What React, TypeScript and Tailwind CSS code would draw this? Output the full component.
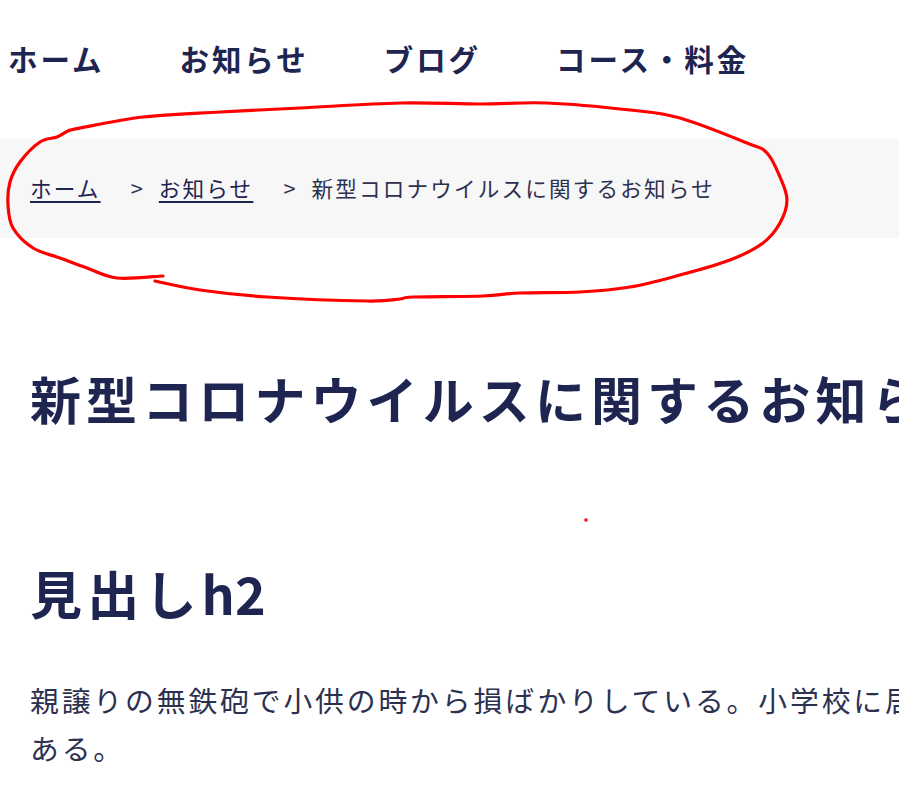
import React from "react";

const pts: [number, number][] = [
  [163, 276], [117, 278], [87, 268], [60, 258], [33, 248], [13, 228], [8, 205], [10, 182],
  [20, 162], [40, 142], [57, 137], [68, 131], [80, 128], [143, 117], [220, 112], [300, 108],
  [400, 103], [480, 104], [547, 103], [630, 110], [680, 118], [747, 143], [767, 153],
  [780, 177], [787, 200], [780, 223], [763, 243], [730, 260], [680, 275], [630, 287],
  [580, 292], [520, 293], [483, 296], [413, 297], [400, 299], [367, 301], [267, 297],
  [200, 290], [155, 281],
];

function smooth(p: [number, number][]): string {
  let d = `M ${p[0][0]} ${p[0][1]}`;
  for (let i = 0; i < p.length - 1; i++) {
    const p0 = p[i - 1] || p[i];
    const p1 = p[i];
    const p2 = p[i + 1];
    const p3 = p[i + 2] || p2;
    const c1x = p1[0] + (p2[0] - p0[0]) / 6;
    const c1y = p1[1] + (p2[1] - p0[1]) / 6;
    const c2x = p2[0] - (p3[0] - p1[0]) / 6;
    const c2y = p2[1] - (p3[1] - p1[1]) / 6;
    d += ` C ${c1x.toFixed(1)} ${c1y.toFixed(1)} ${c2x.toFixed(1)} ${c2y.toFixed(1)} ${p2[0]} ${p2[1]}`;
  }
  return d;
}

export default function App() {
  const font = { fontFamily: '"Noto Sans CJK JP", "Noto Sans", sans-serif' };
  return (
    <div className="relative w-[899px] h-[796px] overflow-hidden bg-white" style={font}>
      <header className="h-[139px] pt-[40px]">
        <nav className="flex gap-[75px] pl-[8px] text-[29.5px] leading-[36px] font-bold tracking-[0.1em] text-[#1e2550]">
          <span>ホーム</span>
          <span>お知らせ</span>
          <span>ブログ</span>
          <span>コース・料金</span>
        </nav>
      </header>

      <div className="h-[99px] w-full bg-[#f7f7f7] flex items-center pl-[30px] text-[21.6px] tracking-[0.1em] text-[#2c3150] whitespace-nowrap">
        <a className="underline decoration-2 underline-offset-[4px] text-[#1e2550]">ホーム</a>
        <span className="ml-[30px] mr-[14px]">&gt;</span>
        <a className="underline decoration-2 underline-offset-[4px] text-[#1e2550]">お知らせ</a>
        <span className="ml-[30px] mr-[14px]">&gt;</span>
        <span>新型コロナウイルスに関するお知らせ</span>
      </div>

      <main className="w-[1820px] pl-[30px] text-[#1e2550]">
        <h1 className="mt-[120px] text-[51px] leading-[81px] font-bold tracking-[0.1em] whitespace-nowrap">
          新型コロナウイルスに関するお知らせ
        </h1>
        <h2 className="mt-[114px] text-[52px] leading-[80px] font-bold tracking-[0.1em]">
          見出し<span className="tracking-normal">h2</span>
        </h2>
        <p className="mt-[43px] text-[28.8px] leading-[48px] tracking-[0.1em] text-[#2c3150]">
          親譲りの無鉄砲で小供の時から損ばかりしている。小学校に居る時分学校の二階から飛び降りて一週間ほど腰を抜かした事がある。
        </p>
      </main>

      <svg className="absolute left-0 top-0 pointer-events-none" width="899" height="796" viewBox="0 0 899 796">
        <path d={smooth(pts)} fill="none" stroke="#ff0000" strokeWidth="3.2" strokeLinecap="round" strokeLinejoin="round" />
        <rect x="584.5" y="518.5" width="3" height="3" fill="#ff0000" />
      </svg>
    </div>
  );
}
